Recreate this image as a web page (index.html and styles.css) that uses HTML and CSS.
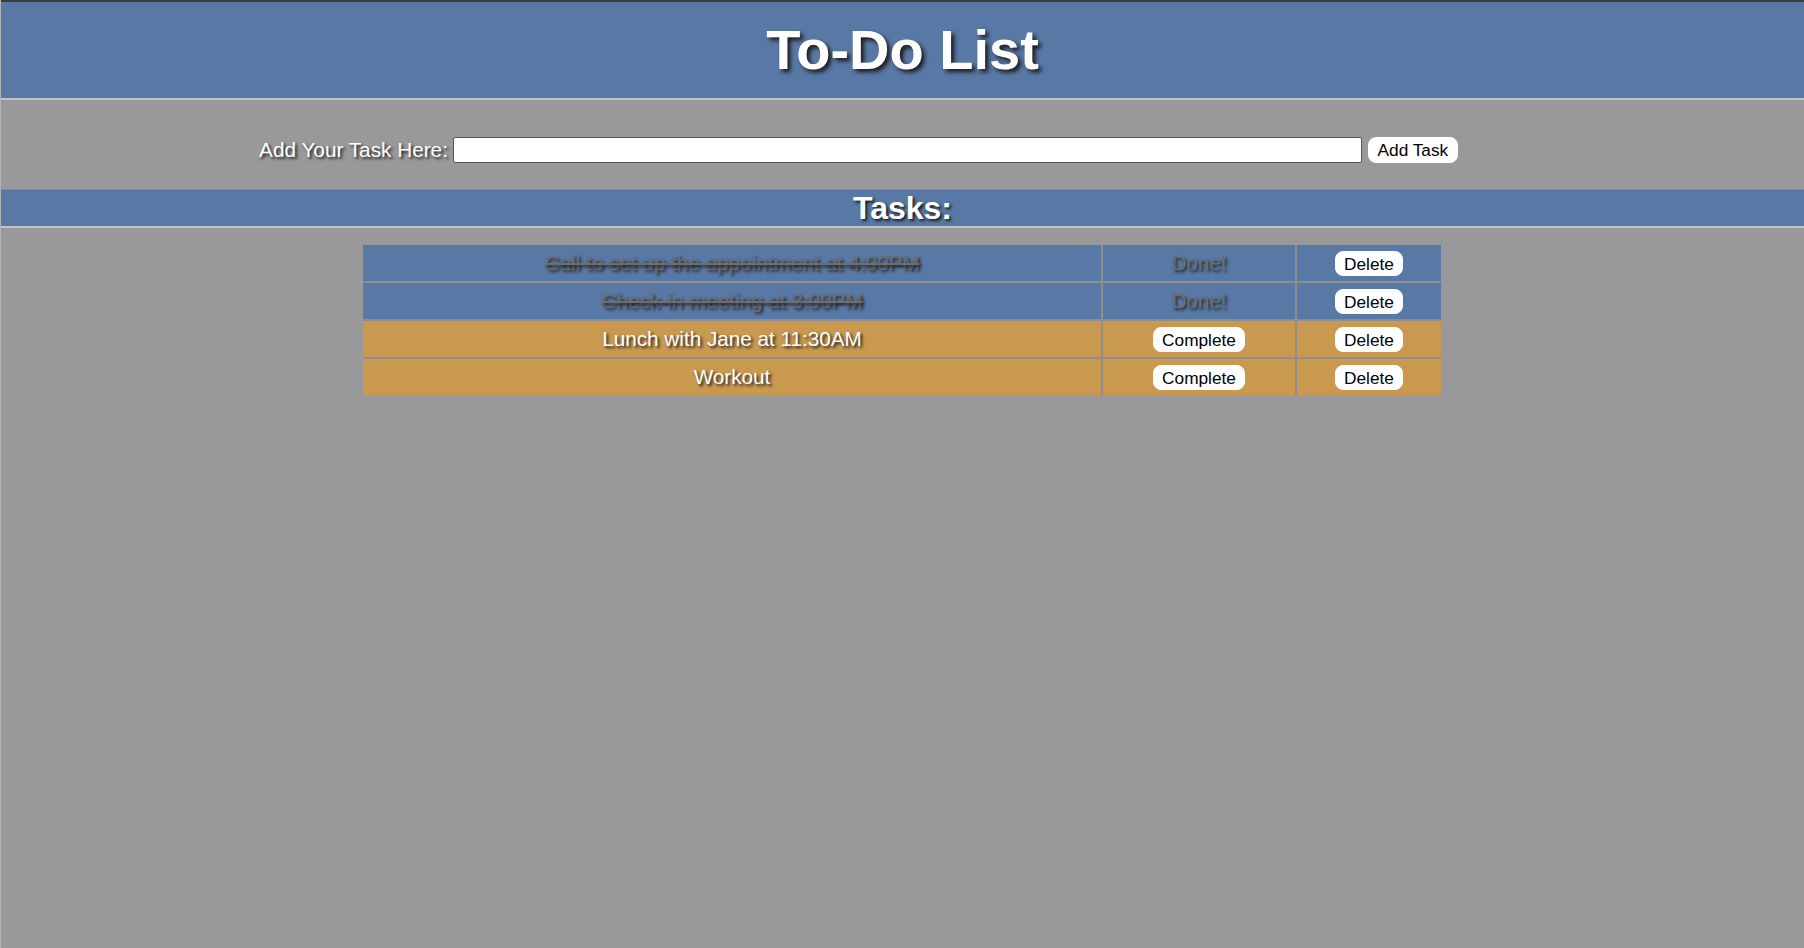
FILE: index.html
```html
<!DOCTYPE html>
<html lang="en">
<head>
<meta charset="utf-8">
<title>To-Do List</title>
<link rel="stylesheet" href="styles.css">
</head>
<body>
<header class="header">
  <h1 class="title">To-Do List</h1>
</header>
<section class="add-section">
  <form class="add-form">
    <label class="add-label" for="task">Add Your Task Here:</label>
    <input class="add-input" id="task" type="text">
    <button class="btn" type="button">Add Task</button>
  </form>
</section>
<div class="tasks-band">
  <h2 class="tasks-title">Tasks:</h2>
</div>
<main class="list-wrap">
  <table class="task-table">
    <colgroup>
      <col class="col-name">
      <col class="col-status">
      <col class="col-action">
    </colgroup>
    <tbody>
      <tr class="row done">
        <td class="task-name">Call to set up the appointment at 4:00PM</td>
        <td class="task-status">Done!</td>
        <td><button class="btn" type="button">Delete</button></td>
      </tr>
      <tr class="row done">
        <td class="task-name">Check-in meeting at 3:00PM</td>
        <td class="task-status">Done!</td>
        <td><button class="btn" type="button">Delete</button></td>
      </tr>
      <tr class="row pending">
        <td class="task-name">Lunch with Jane at 11:30AM</td>
        <td><button class="btn" type="button">Complete</button></td>
        <td><button class="btn" type="button">Delete</button></td>
      </tr>
      <tr class="row pending">
        <td class="task-name">Workout</td>
        <td><button class="btn" type="button">Complete</button></td>
        <td><button class="btn" type="button">Delete</button></td>
      </tr>
    </tbody>
  </table>
</main>
</body>
</html>
```
FILE: styles.css
```css
html, body {
  margin: 0;
  padding: 0;
}
body {
  background: #99999b;
  font-family: "Liberation Sans", Arial, sans-serif;
  min-height: 948px;
  border-left: 1px solid #b4b4b6;
  box-sizing: border-box;
}
.header {
  background: #5878a6;
  border-top: 2px solid #3c3c3c;
  border-bottom: 2px solid #bcc6d6;
  height: 96px;
  display: flex;
  align-items: center;
  justify-content: center;
}
.title {
  margin: 0;
  font-size: 56px;
  line-height: 62px;
  font-weight: bold;
  color: #ffffff;
  text-shadow: 3px 3px 4px #1a1a1a;
}
.add-section {
  height: 90px;
  box-sizing: border-box;
  padding-top: 37px;
  border-bottom: 1px solid #8a8a8c;
}
.add-form {
  display: flex;
  justify-content: center;
  align-items: center;
  padding-right: 88px;
  margin: 0;
}
.add-label {
  font-size: 20.75px;
  color: #ffffff;
  text-shadow: 2px 2px 3px #1e1e1e;
  margin-right: 5px;
}
.add-input {
  width: 909px;
  height: 26px;
  box-sizing: border-box;
  border: 1px solid #555555;
  border-radius: 2px;
  background: #ffffff;
  margin: 0 6px 0 0;
  padding: 0 4px;
}
.btn {
  font-family: "Liberation Sans", Arial, sans-serif;
  font-size: 17.25px;
  color: #000000;
  background: #ffffff;
  border: 1px solid #ffffff;
  border-radius: 8px;
  height: 26px;
  padding: 0 8px;
  line-height: 22px;
  margin: 0;
}
.add-form .btn {
  width: 90px;
}
.tasks-band {
  background: #5878a6;
  height: 36px;
  border-bottom: 2px solid #bcc6d6;
  display: flex;
  align-items: center;
  justify-content: center;
}
.tasks-title {
  margin: 0;
  font-size: 32px;
  line-height: 36px;
  font-weight: bold;
  color: #ffffff;
  text-shadow: 2px 2px 3px #1a1a1a;
}
.list-wrap {
  display: flex;
  justify-content: center;
  padding-top: 17px;
  margin-right: 1px;
}
.task-table {
  width: 1078px;
  table-layout: fixed;
  border-collapse: collapse;
  border-style: hidden;
}
.col-name { width: 739px; }
.col-status { width: 194px; }
.col-action { width: 145px; }
.task-table td {
  border: 2px solid #8e8e90;
  height: 36px;
  padding: 0;
  text-align: center;
  vertical-align: middle;
  font-size: 20.7px;
  color: #ffffff;
  text-shadow: 2px 2px 3px #1e1e1e;
}
.row.done td {
  background: #5878a6;
}
.row.pending td {
  background: #c99950;
}
.row.done .task-name {
  color: #6e6e70;
  text-decoration: line-through;
}
.row.done .task-status {
  color: #6e6e70;
}
.task-table .btn {
  height: 25px;
  text-shadow: none;
  vertical-align: middle;
}
```
